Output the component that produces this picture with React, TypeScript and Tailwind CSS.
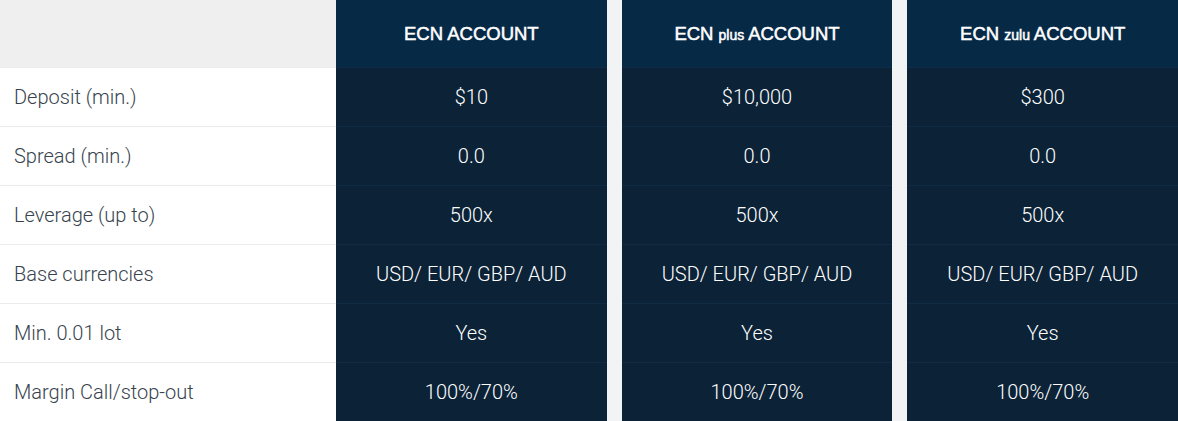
const LABELS = [
  'Deposit (min.)',
  'Spread (min.)',
  'Leverage (up to)',
  'Base currencies',
  'Min. 0.01 lot',
  'Margin Call/stop-out',
];

const ACCOUNTS = [
  { tag: '', values: ['$10', '0.0', '500x', 'USD/ EUR/ GBP/ AUD', 'Yes', '100%/70%'] },
  { tag: 'plus', values: ['$10,000', '0.0', '500x', 'USD/ EUR/ GBP/ AUD', 'Yes', '100%/70%'] },
  { tag: 'zulu', values: ['$300', '0.0', '500x', 'USD/ EUR/ GBP/ AUD', 'Yes', '100%/70%'] },
];

export default function App() {
  return (
    <div className="flex w-[1178px] h-[421px] bg-[#f2f3f5] font-['Roboto',sans-serif] overflow-hidden">
      {/* Labels */}
      <div className="w-[336px] shrink-0 flex flex-col bg-white">
        <div className="h-[67px] bg-[#efefef]" />
        {LABELS.map((label) => (
          <div
            key={label}
            className="h-[59px] flex items-center pl-[14px] border-t border-[#ececec] first:border-t-0 text-[20px] font-light text-[#37434d]"
          >
            {label}
          </div>
        ))}
      </div>
      {/* Account columns */}
      <div className="flex-1 flex gap-[15px]">
        {ACCOUNTS.map((account, i) => (
          <div key={i} className="flex-1 flex flex-col bg-[#0b2237]">
            <div className="h-[67px] bg-[#062a46] flex items-center justify-center font-['Liberation_Sans',Arial,sans-serif] text-[18.5px] text-white [-webkit-text-stroke:0.5px_white]">
              <span>
                ECN {account.tag && <span className="text-[14px]">{account.tag} </span>}ACCOUNT
              </span>
            </div>
            {account.values.map((value, j) => (
              <div
                key={j}
                className="h-[59px] flex items-center justify-center border-t border-[#0f2c44] first:border-t-0 text-[20px] font-light text-white"
              >
                {value}
              </div>
            ))}
          </div>
        ))}
      </div>
    </div>
  );
}
